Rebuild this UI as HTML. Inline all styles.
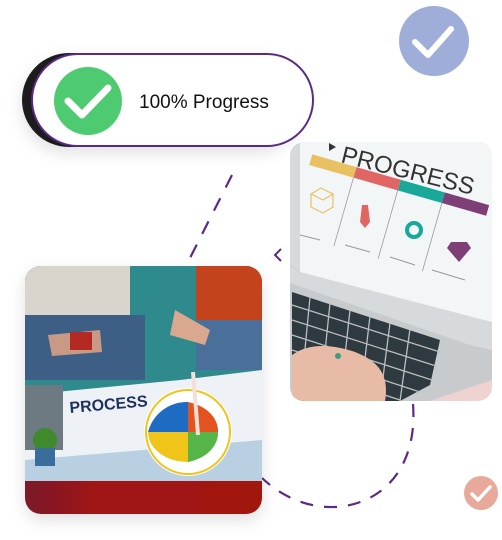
<!DOCTYPE html>
<html><head><style>
html,body{margin:0;padding:0;background:#fff;width:502px;height:540px;overflow:hidden;position:relative;font-family:"Liberation Sans",sans-serif}
.abs{position:absolute}
</style></head><body>
<svg class="abs" style="left:0;top:0" width="502" height="540" viewBox="0 0 502 540">
<defs>
<filter id="sh" x="-20%" y="-20%" width="140%" height="160%"><feDropShadow dx="0" dy="6" stdDeviation="8" flood-color="#000" flood-opacity="0.12"/></filter>
<clipPath id="lap"><rect x="290" y="142" width="202" height="259" rx="14"/></clipPath>
<clipPath id="proc"><rect x="25" y="266" width="237" height="248" rx="16"/></clipPath>
<linearGradient id="red" x1="0" y1="0" x2="1" y2="0"><stop offset="0" stop-color="#7a1a2a"/><stop offset="0.3" stop-color="#a01616"/><stop offset="1" stop-color="#a1150f"/></linearGradient>
</defs>

<circle cx="434" cy="41" r="35" fill="#9eaed9"/>
<path d="M415 42 L428 55 L451 29" stroke="#fff" stroke-width="6" fill="none" stroke-linecap="round" stroke-linejoin="round"/>

<rect x="22" y="53" width="280" height="94" rx="47" fill="#1c1c1c" filter="url(#sh)"/>
<rect x="32" y="54" width="281" height="92" rx="46" fill="#fff" stroke="#5b2a86" stroke-width="2"/>
<circle cx="88" cy="101" r="34" fill="#4ecb71"/>
<path d="M68 101 L82 115 L108 88" stroke="#fff" stroke-width="7" fill="none" stroke-linecap="round" stroke-linejoin="round"/>
<text x="139" y="108" font-family="Liberation Sans, sans-serif" font-size="19" fill="#111">100% Progress</text>

<path d="M232 175 L190 258" stroke="#5b2a86" stroke-width="2.2" stroke-dasharray="14 12" fill="none"/>
<path d="M281 249 L275 255 L281 261" stroke="#5b2a86" stroke-width="2" fill="none"/>
<path d="M413 404 C418 470 380 505 335 507 C305 508 280 495 262 478" stroke="#5b2a86" stroke-width="2.2" stroke-dasharray="13 11" fill="none"/>

<circle cx="481" cy="493" r="17" fill="#e8a99a"/>
<path d="M472 494 L478 500 L490 487" stroke="#fff" stroke-width="3.5" fill="none" stroke-linecap="round" stroke-linejoin="round"/>

<!-- laptop photo -->
<g clip-path="url(#lap)">
<rect x="290" y="142" width="202" height="259" fill="#efd3d1"/>
<polygon points="290,142 492,142 492,345 470,360 290,290" fill="#d6dadc"/>
<polygon points="300,142 492,142 492,322 300,272" fill="#f3f6f7"/>
<path d="M290 265 L300 272" stroke="#ccc"/>
<text x="0" y="0" transform="translate(340 162) rotate(14)" font-size="24" fill="#333" font-family="Liberation Sans, sans-serif">PROGRESS</text>
<path d="M329 143 L336 147 L329 151 Z" fill="#333"/>
<g transform="rotate(16 390 210)">
<rect x="300" y="178" width="46" height="11" fill="#e9c062"/>
<rect x="346" y="178" width="46" height="11" fill="#e06666"/>
<rect x="392" y="178" width="46" height="11" fill="#1aa89a"/>
<rect x="438" y="178" width="46" height="11" fill="#7e3f77"/>
<path d="M346 189 L346 260 M392 189 L392 260 M438 189 L438 260" stroke="#999" stroke-width="0.8"/>
</g>
<path d="M311 194 L321 188 L333 194 L323 200 Z M311 194 L311 207 L323 213 L333 207 L333 194" stroke="#e9c062" fill="none" stroke-width="1.2"/>
<path d="M362 205 L368 205 L370 222 L365 228 L360 222 Z" fill="#e06666"/>
<circle cx="414" cy="230" r="7" fill="none" stroke="#1aa89a" stroke-width="4"/>
<path d="M451 242 L467 242 L471 248 L459 262 L447 248 Z" fill="#7e3f77"/>
<g stroke="#999" stroke-width="1"><path d="M300 235 L320 240 M345 245 L370 252 M390 257 L415 265 M432 270 L465 280"/></g>
<!-- body and keyboard -->
<polygon points="290,283 470,345 492,350 492,380 430,401 290,401" fill="#c8cbcd"/>
<polygon points="292,292 440,340 430,385 400,401 292,401" fill="#2f3a40"/>
<g stroke="#b9bec1" stroke-width="1.3">
<path d="M292 305 L440 352 M292 320 L436 366 M292 335 L432 380 M292 350 L420 392 M292 365 L400 400"/>
<path d="M310 297 L300 401 M330 303 L320 401 M350 310 L340 401 M370 316 L360 401 M390 323 L380 401 M410 329 L400 401"/>
</g>
<path d="M292 355 C310 342 335 345 355 352 C375 360 390 372 385 401 L292 401 Z" fill="#e8bba6"/>
<circle cx="338" cy="356" r="3" fill="#3f9b7f"/>
</g>

<!-- process photo -->
<g filter="url(#sh)"><rect x="25" y="266" width="237" height="248" rx="16" fill="url(#red)"/></g>
<g clip-path="url(#proc)">
<rect x="25" y="266" width="237" height="215" fill="#2f8a8e"/>
<rect x="25" y="266" width="105" height="55" fill="#d9d4cc"/>
<rect x="25" y="315" width="120" height="65" fill="#3d5f86"/>
<rect x="196" y="266" width="66" height="60" fill="#c4431d"/>
<rect x="196" y="320" width="66" height="50" fill="#4a6f99"/>
<path d="M48 335 L100 330 L102 352 L52 356 Z" fill="#c89a85"/>
<rect x="70" y="332" width="22" height="18" fill="#b32a22"/>
<path d="M175 310 L210 330 L205 345 L170 335 Z" fill="#d9a88e"/>
<path d="M25 395 L180 380 L262 370 L262 481 L25 481 Z" fill="#eef2f7"/>
<path d="M25 460 L262 440 L262 481 L25 481 Z" fill="#b9cfe2"/>
<rect x="25" y="385" width="38" height="65" fill="#6e7a82"/>
<text x="0" y="0" transform="translate(70 413) rotate(-5)" font-size="16" font-weight="bold" fill="#1d3260" font-family="Liberation Sans, sans-serif">PROCESS</text>
<g transform="translate(188 432)">
<circle r="44" fill="#fff"/>
<circle r="42" fill="none" stroke="#f0c419" stroke-width="2"/>
<path d="M0 0 L-40 0 A40 40 0 0 1 0 -30 Z" fill="#1e6bc4"/>
<path d="M0 0 L0 -30 A40 30 0 0 1 30 0 Z" fill="#e2531f"/>
<path d="M0 0 L30 0 A40 30 0 0 1 0 30 Z" fill="#55b546"/>
<path d="M0 0 L0 30 A40 30 0 0 1 -40 0 Z" fill="#f0c419"/>
</g>
<path d="M193 372 L198 435" stroke="#f4e0d6" stroke-width="4"/>
<circle cx="45" cy="440" r="12" fill="#3e8a2c"/>
<rect x="35" y="448" width="20" height="18" fill="#3a6c9d"/>
</g>
</svg>
</body></html>
